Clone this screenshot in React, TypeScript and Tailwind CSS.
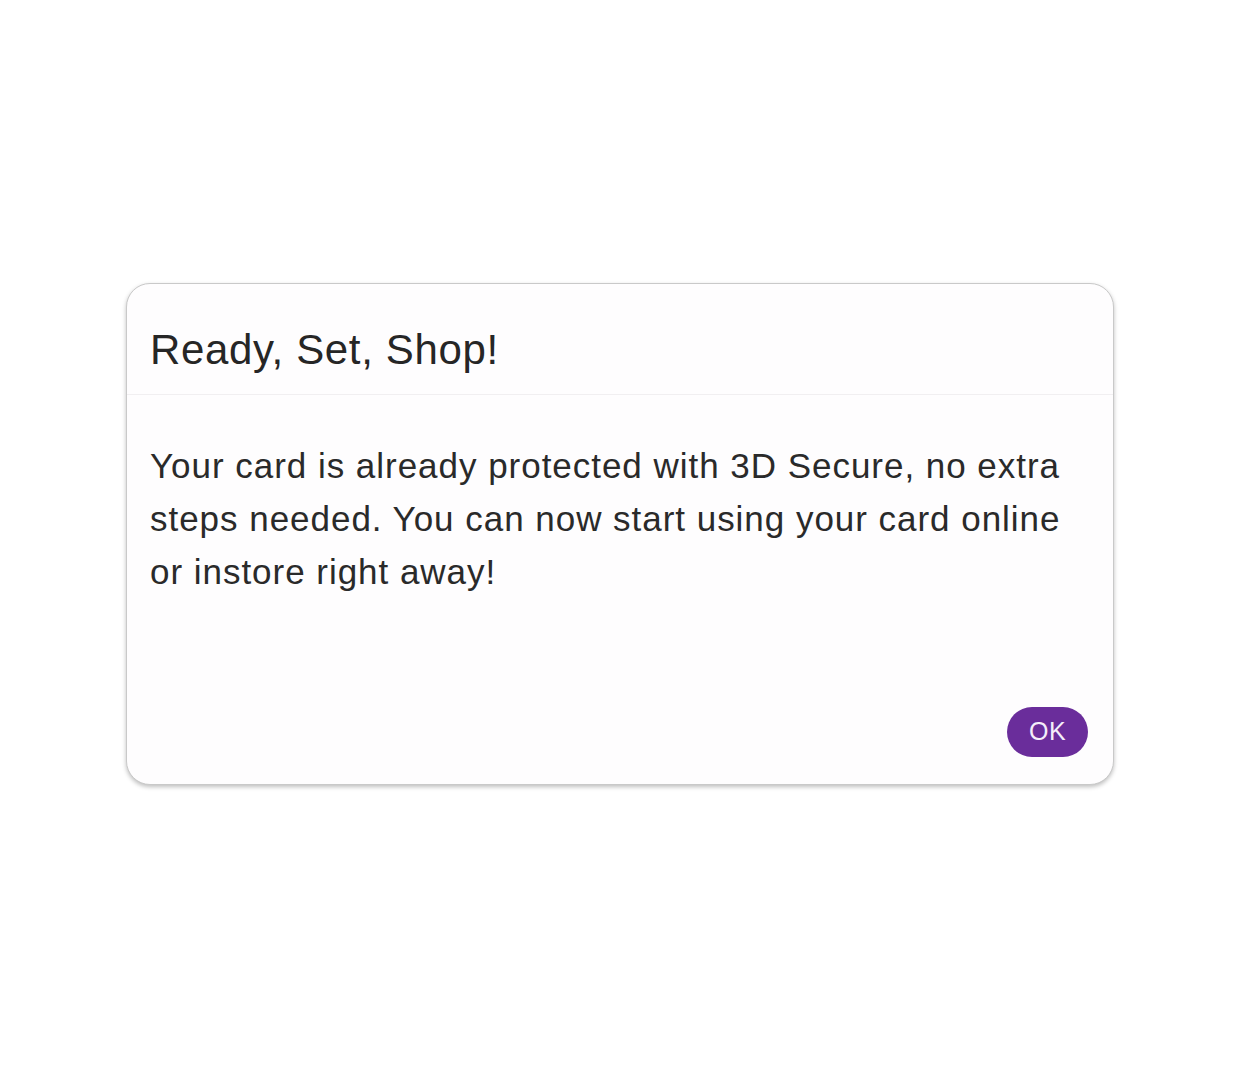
import React from "react";

export default function App() {
  return (
    <div className="min-h-[1077px] w-full bg-white pt-[283px]" style={{ fontFamily: '"Liberation Sans", Arial, sans-serif' }}>
      <div className="mx-auto flex h-[502px] w-[988px] flex-col rounded-[24px] border border-[#c9c9c9] bg-[#fefdfe] shadow-[0_2px_4px_rgba(0,0,0,0.25)]">
        <div className="border-b border-[#f1eff1] px-[23px] pt-[41px] pb-[19px]">
          <h1 className="text-[42px] leading-[50px] tracking-[0.65px] text-[#262626]">Ready, Set, Shop!</h1>
        </div>
        <div className="flex-1 px-[23px] pt-[44px]">
          <p className="text-[35px] leading-[53px] tracking-[0.97px] text-[#2a2a2a]">
            Your card is already protected with 3D Secure, no extra steps needed. You can now start using your card online or instore right away!
          </p>
        </div>
        <div className="flex justify-end px-[25px] pb-[27px]">
          <button className="flex h-[50px] w-[81px] items-center justify-center rounded-full bg-[#6a2d9b] text-[25px] tracking-[0.5px] text-[#f4eefa]">
            OK
          </button>
        </div>
      </div>
    </div>
  );
}
